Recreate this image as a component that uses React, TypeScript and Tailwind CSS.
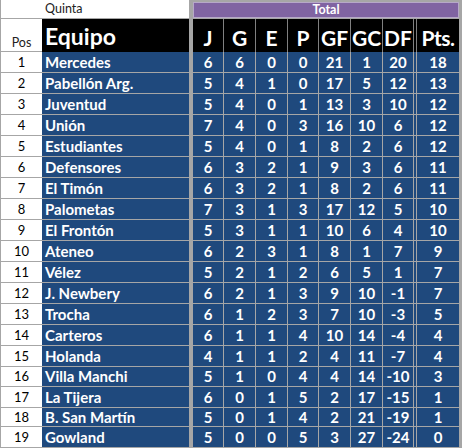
import React from "react";

type Row = [number, string, number, number, number, number, number, number, number, number];

const rows: Row[] = [
  [1, "Mercedes", 6, 6, 0, 0, 21, 1, 20, 18],
  [2, "Pabellón Arg.", 5, 4, 1, 0, 17, 5, 12, 13],
  [3, "Juventud", 5, 4, 0, 1, 13, 3, 10, 12],
  [4, "Unión", 7, 4, 0, 3, 16, 10, 6, 12],
  [5, "Estudiantes", 5, 4, 0, 1, 8, 2, 6, 12],
  [6, "Defensores", 6, 3, 2, 1, 9, 3, 6, 11],
  [7, "El Timón", 6, 3, 2, 1, 8, 2, 6, 11],
  [8, "Palometas", 7, 3, 1, 3, 17, 12, 5, 10],
  [9, "El Frontón", 5, 3, 1, 1, 10, 6, 4, 10],
  [10, "Ateneo", 6, 2, 3, 1, 8, 1, 7, 9],
  [11, "Vélez", 5, 2, 1, 2, 6, 5, 1, 7],
  [12, "J. Newbery", 6, 2, 1, 3, 9, 10, -1, 7],
  [13, "Trocha", 6, 1, 2, 3, 7, 10, -3, 5],
  [14, "Carteros", 6, 1, 1, 4, 10, 14, -4, 4],
  [15, "Holanda", 4, 1, 1, 2, 4, 11, -7, 4],
  [16, "Villa Manchi", 5, 1, 0, 4, 4, 14, -10, 3],
  [17, "La Tijera", 6, 0, 1, 5, 2, 17, -15, 1],
  [18, "B. San Martín", 5, 0, 1, 4, 2, 21, -19, 1],
  [19, "Gowland", 5, 0, 0, 5, 3, 27, -24, 0],
];

const heights = [21, 21, 21, 21, 21, 21, 21, 21, 21, 21, 21, 21, 21, 21, 21, 20, 21, 19, 21];

const statWidths = ["w-[31px]", "w-[32px]", "w-[32px]", "w-[31px]", "w-[32px]", "w-[32px]"];
const statHeads = ["J", "G", "E", "P", "GF", "GC"];

const font = { fontFamily: "Lato, 'Open Sans', sans-serif" };

export default function App() {
  return (
    <div className="w-[462px] h-[448px] bg-white overflow-hidden" style={font}>
      {/* top row */}
      <div className="flex h-[19px]">
        <div className="w-[189px] h-[19px] border-b border-l border-[#a6a6a6] flex items-center">
          <span className="pl-[44px] text-[12.5px] text-[#222] leading-none">Quinta</span>
        </div>
        <div className="w-[4px] h-[19px] bg-[#a6a6a6]" />
        <div className="w-[269px] h-[19px] border-t-2 border-b border-[#a6a6a6] flex">
          <div className="w-[266px] h-full bg-[#8064a2] border border-[#b6a8c8] flex items-center justify-center">
            <span className="text-white font-bold text-[12.5px] leading-none">Total</span>
          </div>
          <div className="w-[3px] h-full bg-[#a6a6a6]" />
        </div>
      </div>
      {/* header row */}
      <div className="flex h-[33px]">
        <div className="w-[42px] h-full border-l border-b border-[#a6a6a6] flex items-end justify-center pb-[2px]">
          <span className="text-[12.5px] text-[#222] leading-none">Pos</span>
        </div>
        <div className="w-[147px] h-full bg-black flex items-end pb-[4px] pl-[3px]">
          <span className="text-white font-bold text-[23px] leading-none">Equipo</span>
        </div>
        <div className="w-[4px] h-full bg-[#a6a6a6]" />
        {statHeads.map((h, i) => (
          <div
            key={h}
            className={`${statWidths[i]} h-full bg-black border-r border-[#808080] flex items-end justify-center pb-[4px]`}
          >
            <span className="text-white font-bold text-[21px] leading-none">{h}</span>
          </div>
        ))}
        <div className="w-[30px] h-full bg-black flex items-end justify-center pb-[4px]">
          <span className="text-white font-bold text-[21px] leading-none">DF</span>
        </div>
        <div className="w-[4px] h-full bg-black border-x border-[#808080]" />
        <div className="w-[42px] h-full bg-black flex items-end justify-center pb-[4px]">
          <span className="text-white font-bold text-[21px] leading-none tracking-[-0.5px]">Pts.</span>
        </div>
        <div className="w-[3px] h-full bg-[#a6a6a6]" />
      </div>
      {/* data rows */}
      {rows.map((r, idx) => {
        const [pos, team, ...stats] = r;
        const hc = heights[idx] === 21 ? "h-[21px]" : heights[idx] === 20 ? "h-[20px]" : "h-[19px]";
        return (
          <div key={pos} className={`flex ${hc}`}>
            <div className="w-[42px] h-full border-l border-b border-[#a6a6a6] flex items-center justify-center">
              <span className="text-[13px] text-black leading-none">{pos}</span>
            </div>
            <div className="w-[147px] h-full bg-[#1f497d] border-b border-[#a6a6a6] flex items-center pl-[3px]">
              <span className="text-white font-bold text-[15px] leading-none">{team}</span>
            </div>
            <div className="w-[4px] h-full bg-[#a6a6a6]" />
            {stats.slice(0, 6).map((s, i) => (
              <div
                key={i}
                className={`${statWidths[i]} h-full bg-[#1f497d] border-r border-b border-[#a6a6a6] flex items-center justify-center`}
              >
                <span className="text-white font-bold text-[15px] leading-none">{s}</span>
              </div>
            ))}
            <div className="w-[30px] h-full bg-[#1f497d] border-b border-[#a6a6a6] flex items-center justify-center">
              <span className="text-white font-bold text-[15px] leading-none">{stats[6]}</span>
            </div>
            <div className="w-[4px] h-full bg-[#1f497d] border-x border-b border-[#a6a6a6]" />
            <div className="w-[42px] h-full bg-[#1f497d] border-b border-[#a6a6a6] flex items-center justify-center">
              <span className="text-white font-bold text-[15px] leading-none">{stats[7]}</span>
            </div>
            <div className="w-[3px] h-full bg-[#a6a6a6]" />
          </div>
        );
      })}
    </div>
  );
}
